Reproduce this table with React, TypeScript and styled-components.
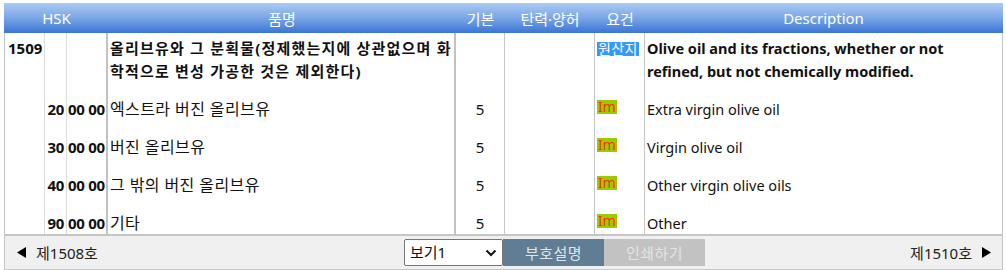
import React from "react";
import styled, { createGlobalStyle } from "styled-components";

const GlobalStyle = createGlobalStyle`
  html, body { margin: 0; padding: 0; background: #ffffff; }
  body {
    font-family: "Noto Sans", "Noto Sans CJK KR", sans-serif;
    font-size: 15px;
    color: #111;
  }
`;

const COLS = "40px 22px 41px 348px 49px 90px 50px 1fr";

const Frame = styled.div`
  margin: 3px 0 0 4px;
  width: 999px;
`;

const Header = styled.div`
  display: grid;
  grid-template-columns: ${COLS};
  height: 30px;
  padding: 0 1px;
  background: linear-gradient(to bottom, #aacaf2 0%, #7aa6e6 50%, #3a74d4 100%);
  color: #ffffff;
  font-size: 15px;
`;

const HeadCell = styled.div<{ $span?: number }>`
  grid-column: span ${(p) => p.$span ?? 1};
  display: flex;
  align-items: center;
  justify-content: center;
  white-space: nowrap;
`;

const Body = styled.div`
  height: 201px;
  overflow: hidden;
  border-left: 1px solid #c6c6c6;
  border-right: 1px solid #c6c6c6;
`;

const Row = styled.div`
  display: grid;
  grid-template-columns: ${COLS};
`;

type Kind = "code" | "sub" | "tail" | "name" | "mid" | "desc";

const Cell = styled.div<{
  $first?: boolean;
  $line?: "light" | "mid" | "heavy" | "none";
  $align?: "left" | "center" | "right";
  $kind?: Kind;
}>`
  box-sizing: border-box;
  padding-top: ${(p) => (p.$first ? "4px" : "7.5px")};
  padding-bottom: ${(p) => (p.$first ? "7px" : "7.5px")};
  padding-left: ${(p) => (p.$kind === "tail" ? "1px" : p.$kind === "code" ? "3px" : "2px")};
  padding-right: ${(p) => (p.$kind === "tail" ? "0" : "2px")};
  line-height: 23px;
  white-space: ${(p) => (p.$kind === "sub" || p.$kind === "tail" ? "nowrap" : "normal")};
  text-align: ${(p) => p.$align ?? "left"};
  font-weight: ${(p) => (p.$first && p.$kind !== "mid" ? 700 : 400)};
  font-size: ${(p) =>
    p.$kind === "name" ? (p.$first ? "15px" : "16px") : p.$kind === "desc" ? "14.5px" : "15px"};
  letter-spacing: ${(p) => (p.$kind === "name" ? (p.$first ? "1.2px" : "0.4px") : "0")};
  border-right: ${(p) =>
    p.$line === "light"
      ? "1px solid #dcdcdc"
      : p.$line === "heavy"
      ? "2px solid #c2c2c2"
      : p.$line === "mid"
      ? "1px solid #c6c6c6"
      : "none"};
`;

const Num = styled.span`
  font-weight: 700;
  letter-spacing: -0.3px;
`;

const OriginBadge = styled.span`
  display: inline-block;
  margin-top: 5px;
  padding: 0 1px;
  height: 14px;
  line-height: 14px;
  background: #3399ff;
  color: #ffffff;
  font-size: 14px;
  font-weight: 400;
  letter-spacing: 0.4px;
`;

const ImBadge = styled.span`
  display: inline-block;
  margin-top: 2px;
  width: 20px;
  height: 14px;
  line-height: 14px;
  text-align: center;
  background: #99cc00;
  color: #ff3300;
  font-size: 14px;
  vertical-align: top;
`;

const Footer = styled.div`
  display: grid;
  grid-template-columns: 399px auto 1fr;
  align-items: center;
  height: 30px;
  padding: 1px 0 2px;
  box-sizing: content-box;
  background: #f0f0f0;
  border: 1px solid #c6c6c6;
  border-top: 2px solid #c6c6c6;
`;

const NavLink = styled.div<{ $right?: boolean }>`
  display: flex;
  align-items: center;
  justify-content: ${(p) => (p.$right ? "flex-end" : "flex-start")};
  gap: 10px;
  padding: ${(p) => (p.$right ? "0 11px 0 0" : "0 0 0 12px")};
  font-size: 15px;
  color: #222;
`;

const Controls = styled.div`
  display: flex;
  height: 27px;
`;

const SelectWrap = styled.div`
  position: relative;
  width: 99px;
`;

const Select = styled.select`
  appearance: none;
  width: 100%;
  height: 27px;
  box-sizing: border-box;
  border: 1px solid #767676;
  border-radius: 2px;
  background: #ffffff;
  padding: 0 0 0 5px;
  font-family: "Noto Sans", "Noto Sans CJK KR", sans-serif;
  font-size: 15px;
  color: #111;
`;

const Chevron = styled.svg`
  position: absolute;
  right: 6px;
  top: 10px;
  pointer-events: none;
`;

const Button = styled.button<{ $disabled?: boolean }>`
  width: 101px;
  height: 27px;
  border: none;
  margin: 0;
  padding: 0;
  font-family: "Noto Sans", "Noto Sans CJK KR", sans-serif;
  font-size: 15px;
  letter-spacing: 0.5px;
  background: ${(p) => (p.$disabled ? "#c2c2c2" : "#607d93")};
  color: ${(p) => (p.$disabled ? "#e4e4e4" : "#dde5ec")};
`;

const Tri = ({ dir }: { dir: "left" | "right" }) => (
  <svg width="9" height="11" viewBox="0 0 9 11">
    {dir === "left" ? (
      <polygon points="9,0 9,11 0,5.5" fill="#000" />
    ) : (
      <polygon points="0,0 0,11 9,5.5" fill="#000" />
    )}
  </svg>
);

type Item = { sub: string; name: string; desc: string };

const items: Item[] = [
  { sub: "20", name: "엑스트라 버진 올리브유", desc: "Extra virgin olive oil" },
  { sub: "30", name: "버진 올리브유", desc: "Virgin olive oil" },
  { sub: "40", name: "그 밖의 버진 올리브유", desc: "Other virgin olive oils" },
  { sub: "90", name: "기타", desc: "Other" },
];

export default function App() {
  return (
    <>
      <GlobalStyle />
      <Frame>
        <Header>
          <HeadCell $span={3}>HSK</HeadCell>
          <HeadCell>품명</HeadCell>
          <HeadCell>기본</HeadCell>
          <HeadCell>탄력·양허</HeadCell>
          <HeadCell>요건</HeadCell>
          <HeadCell>Description</HeadCell>
        </Header>
        <Body>
          <Row>
            <Cell $first $line="light" $kind="code">
              1509
            </Cell>
            <Cell $first $line="light" $kind="sub" />
            <Cell $first $line="heavy" $kind="tail" />
            <Cell $first $line="heavy" $kind="name">
              올리브유와 그 분획물(정제했는지에 상관없으며 화학적으로 변성 가공한 것은 제외한다)
            </Cell>
            <Cell $first $line="mid" $kind="mid" />
            <Cell $first $line="mid" $kind="mid" />
            <Cell $first $line="mid" $kind="mid">
              <OriginBadge>원산지</OriginBadge>
            </Cell>
            <Cell $first $line="none" $kind="desc">
              Olive oil and its fractions, whether or not refined, but not chemically modified.
            </Cell>
          </Row>
          {items.map((it) => (
            <Row key={it.sub}>
              <Cell $line="light" $kind="code" />
              <Cell $line="light" $align="right" $kind="sub">
                <Num>{it.sub}</Num>
              </Cell>
              <Cell $line="heavy" $kind="tail">
                <Num>00 00</Num>
              </Cell>
              <Cell $line="heavy" $kind="name">
                {it.name}
              </Cell>
              <Cell $line="mid" $align="center" $kind="mid">
                5
              </Cell>
              <Cell $line="mid" $kind="mid" />
              <Cell $line="mid" $kind="mid">
                <ImBadge>Im</ImBadge>
              </Cell>
              <Cell $line="none" $kind="desc">
                {it.desc}
              </Cell>
            </Row>
          ))}
        </Body>
        <Footer>
          <NavLink>
            <Tri dir="left" />
            <span>제1508호</span>
          </NavLink>
          <Controls>
            <SelectWrap>
              <Select defaultValue="1">
                <option value="1">보기1</option>
              </Select>
              <Chevron width="12" height="8" viewBox="0 0 12 8">
                <polyline points="1.5,1.5 6,6 10.5,1.5" fill="none" stroke="#111" strokeWidth="2" />
              </Chevron>
            </SelectWrap>
            <Button>부호설명</Button>
            <Button $disabled>인쇄하기</Button>
          </Controls>
          <NavLink $right>
            <span>제1510호</span>
            <Tri dir="right" />
          </NavLink>
        </Footer>
      </Frame>
    </>
  );
}
